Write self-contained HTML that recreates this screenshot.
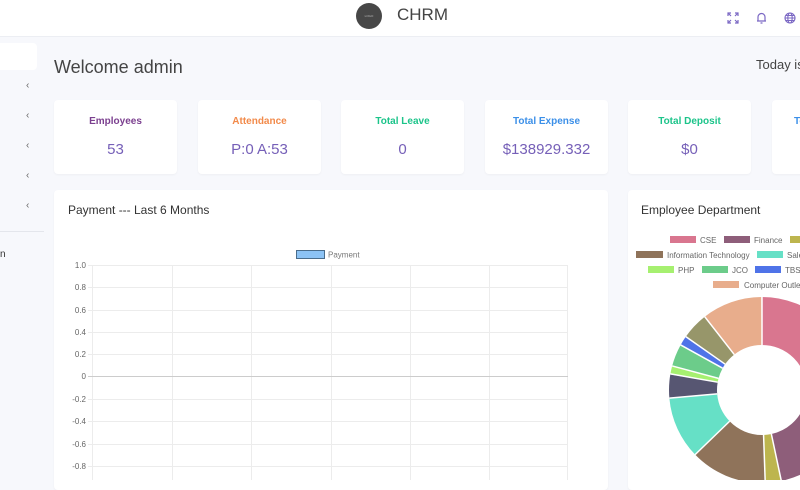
<!DOCTYPE html>
<html><head><meta charset="utf-8"><style>
*{margin:0;padding:0;box-sizing:border-box}
body{width:800px;height:480px;overflow:hidden;background:#f7f8fc;font-family:"Liberation Sans",sans-serif;position:relative}
.hdr{position:absolute;left:0;top:0;width:800px;height:37px;background:#fff;border-bottom:1px solid #eceef3}
.logo{position:absolute;left:356px;top:3px;width:26px;height:26px;border-radius:50%;background:#474747;color:#bbb;font-size:3px;text-align:center;line-height:26px}
.brand{position:absolute;left:397px;top:5px;font-size:17px;color:#444}
.side{position:absolute;left:0;top:38px;width:44px;height:442px;background:#f7f8fc}
.tab{position:absolute;left:0;top:43px;width:37px;height:27px;background:#fff;border-radius:0 4px 4px 0}
.chev{position:absolute;left:26px;font-size:10px;color:#666}
.card{position:absolute;background:#fff;border-radius:4px;box-shadow:0 1px 2px rgba(0,0,0,.04)}
.ct{position:absolute;top:16px;width:100%;text-align:center;font-size:10px;font-weight:bold;white-space:nowrap}
.cv{position:absolute;top:41px;width:100%;text-align:center;font-size:15px;color:#7660b8}
.h{position:absolute;font-size:12px;color:#333}
</style></head><body>
<div class="hdr">
<div class="logo">LOGO</div><div class="brand">CHRM</div>
<svg style="position:absolute;left:727px;top:12px" width="12" height="12" viewBox="0 0 12 12" fill="none" stroke="#7b68c4" stroke-width="1.2"><path d="M1 4V1h3M1 1l3 3M11 4V1H8M11 1L8 4M1 8v3h3M1 11l3-3M11 8v3H8M11 11L8 8"/></svg>
<svg style="position:absolute;left:756px;top:12px" width="11" height="12" viewBox="0 0 11 12" fill="none" stroke="#7b68c4" stroke-width="1.2"><path d="M2 9V5a3.5 3.5 0 0 1 7 0v4H2zM1 9h9M4.5 11h2"/></svg>
<svg style="position:absolute;left:784px;top:12px" width="12" height="12" viewBox="0 0 12 12" fill="none" stroke="#7b68c4" stroke-width="1.1"><circle cx="6" cy="6" r="5"/><ellipse cx="6" cy="6" rx="2.2" ry="5"/><path d="M1 6h10M2 3.5h8M2 8.5h8"/></svg>
</div>
<div class="side"></div>
<div class="tab"></div>
<div class="chev" style="top:80px">‹</div><div class="chev" style="top:110px">‹</div><div class="chev" style="top:140px">‹</div><div class="chev" style="top:170px">‹</div><div class="chev" style="top:200px">‹</div>
<div style="position:absolute;left:0;top:231px;width:44px;height:1px;background:#e4e6ec"></div>
<div style="position:absolute;left:0;top:249px;font-size:10px;color:#333">n</div>
<div style="position:absolute;left:54px;top:57px;font-size:18px;color:#444">Welcome admin</div>
<div style="position:absolute;left:756px;top:57px;font-size:13px;color:#444;white-space:nowrap">Today is</div>

<div class="card" style="left:54px;top:100px;width:123px;height:74px"><div class="ct" style="color:#7b3f8f">Employees</div><div class="cv">53</div></div>
<div class="card" style="left:198px;top:100px;width:123px;height:74px"><div class="ct" style="color:#f28a4a">Attendance</div><div class="cv">P:0 A:53</div></div>
<div class="card" style="left:341px;top:100px;width:123px;height:74px"><div class="ct" style="color:#1cc48a">Total Leave</div><div class="cv">0</div></div>
<div class="card" style="left:485px;top:100px;width:123px;height:74px"><div class="ct" style="color:#3b8fe8">Total Expense</div><div class="cv">$138929.332</div></div>
<div class="card" style="left:628px;top:100px;width:123px;height:74px"><div class="ct" style="color:#1cc48a">Total Deposit</div><div class="cv">$0</div></div>
<div class="card" style="left:772px;top:100px;width:123px;height:74px"><div class="ct" style="color:#3b8fe8;text-align:left;left:22px">Total</div></div>

<div class="card" style="left:54px;top:190px;width:554px;height:300px"></div>
<div class="h" style="left:68px;top:203px">Payment --- Last 6 Months</div>
<svg style="position:absolute;left:0;top:0" width="800" height="480" font-family="Liberation Sans" font-size="8" fill="#666">
<rect x="296.5" y="250.5" width="28" height="8" fill="#8cc3f5" stroke="#4a6d8c"/>
<text x="328" y="257.5" fill="#777">Payment</text>
<g stroke="#ececec" stroke-width="1">
<line x1="88" y1="265.5" x2="568" y2="265.5"/><line x1="88" y1="287.5" x2="568" y2="287.5"/><line x1="88" y1="310.5" x2="568" y2="310.5"/><line x1="88" y1="332.5" x2="568" y2="332.5"/><line x1="88" y1="354.5" x2="568" y2="354.5"/>
<line x1="88" y1="399.5" x2="568" y2="399.5"/><line x1="88" y1="421.5" x2="568" y2="421.5"/><line x1="88" y1="444.5" x2="568" y2="444.5"/><line x1="88" y1="466.5" x2="568" y2="466.5"/>
<line x1="92.5" y1="265" x2="92.5" y2="480"/><line x1="172.5" y1="265" x2="172.5" y2="480"/><line x1="251.5" y1="265" x2="251.5" y2="480"/><line x1="331.5" y1="265" x2="331.5" y2="480"/><line x1="410.5" y1="265" x2="410.5" y2="480"/><line x1="489.5" y1="265" x2="489.5" y2="480"/><line x1="567.5" y1="265" x2="567.5" y2="480"/>
</g>
<line x1="88" y1="376.5" x2="568" y2="376.5" stroke="#ccc"/>
<g text-anchor="end"><text x="86" y="268">1.0</text><text x="86" y="290">0.8</text><text x="86" y="313">0.6</text><text x="86" y="335">0.4</text><text x="86" y="357">0.2</text><text x="86" y="379">0</text><text x="86" y="402">-0.2</text><text x="86" y="424">-0.4</text><text x="86" y="447">-0.6</text><text x="86" y="469">-0.8</text></g>
</svg>

<div class="card" style="left:628px;top:190px;width:200px;height:300px"></div>
<div class="h" style="left:641px;top:203px">Employee Department</div>
<svg style="position:absolute;left:0;top:0" width="800" height="480" font-family="Liberation Sans" font-size="8" fill="#666">
<rect x="670" y="236" width="26" height="7" fill="#d9768f"/><text x="700" y="243">CSE</text>
<rect x="724" y="236" width="26" height="7" fill="#8e5e7a"/><text x="754" y="243">Finance</text>
<rect x="790" y="236" width="26" height="7" fill="#bdb54e"/>
<rect x="636" y="251" width="27" height="7" fill="#8f735a"/><text x="667" y="258">Information Technology</text>
<rect x="757" y="251" width="26" height="7" fill="#66e0c6"/><text x="787" y="258">Sales</text>
<rect x="648" y="266" width="26" height="7" fill="#a6f070"/><text x="678" y="273">PHP</text>
<rect x="702" y="266" width="26" height="7" fill="#6ccc8a"/><text x="732" y="273">JCO</text>
<rect x="755" y="266" width="26" height="7" fill="#4f73e8"/><text x="785" y="273">TBS</text>
<rect x="713" y="281" width="26" height="7" fill="#e8ad8c"/><text x="744" y="288">Computer Outlet</text>
<g transform="rotate(-90 762 390)" fill="none" stroke-width="48">
<circle cx="762" cy="390" r="69" pathLength="360" stroke="#d9768f" stroke-dasharray="110 360" stroke-dashoffset="0"/>
<circle cx="762" cy="390" r="69" pathLength="360" stroke="#8e5e7a" stroke-dasharray="58 360" stroke-dashoffset="-110"/>
<circle cx="762" cy="390" r="69" pathLength="360" stroke="#bdb54e" stroke-dasharray="10 360" stroke-dashoffset="-168"/>
<circle cx="762" cy="390" r="69" pathLength="360" stroke="#8f735a" stroke-dasharray="48 360" stroke-dashoffset="-178"/>
<circle cx="762" cy="390" r="69" pathLength="360" stroke="#66e0c6" stroke-dasharray="39 360" stroke-dashoffset="-226"/>
<circle cx="762" cy="390" r="69" pathLength="360" stroke="#575672" stroke-dasharray="15 360" stroke-dashoffset="-265"/>
<circle cx="762" cy="390" r="69" pathLength="360" stroke="#a6f070" stroke-dasharray="5 360" stroke-dashoffset="-280"/>
<circle cx="762" cy="390" r="69" pathLength="360" stroke="#6ccc8a" stroke-dasharray="14 360" stroke-dashoffset="-285"/>
<circle cx="762" cy="390" r="69" pathLength="360" stroke="#4f73e8" stroke-dasharray="6 360" stroke-dashoffset="-299"/>
<circle cx="762" cy="390" r="69" pathLength="360" stroke="#97966a" stroke-dasharray="17 360" stroke-dashoffset="-305"/>
<circle cx="762" cy="390" r="69" pathLength="360" stroke="#e8ad8c" stroke-dasharray="38 360" stroke-dashoffset="-322"/>
</g>
<g stroke="#fff" stroke-width="1.5">
<path d="M762 345V297"/>
<g transform="rotate(110 762 390)"><path d="M762 345V297"/></g>
<g transform="rotate(168 762 390)"><path d="M762 345V297"/></g>
<g transform="rotate(178 762 390)"><path d="M762 345V297"/></g>
<g transform="rotate(226 762 390)"><path d="M762 345V297"/></g>
<g transform="rotate(265 762 390)"><path d="M762 345V297"/></g>
<g transform="rotate(280 762 390)"><path d="M762 345V297"/></g>
<g transform="rotate(285 762 390)"><path d="M762 345V297"/></g>
<g transform="rotate(299 762 390)"><path d="M762 345V297"/></g>
<g transform="rotate(305 762 390)"><path d="M762 345V297"/></g>
<g transform="rotate(322 762 390)"><path d="M762 345V297"/></g>
</g>
</svg>
</body></html>
